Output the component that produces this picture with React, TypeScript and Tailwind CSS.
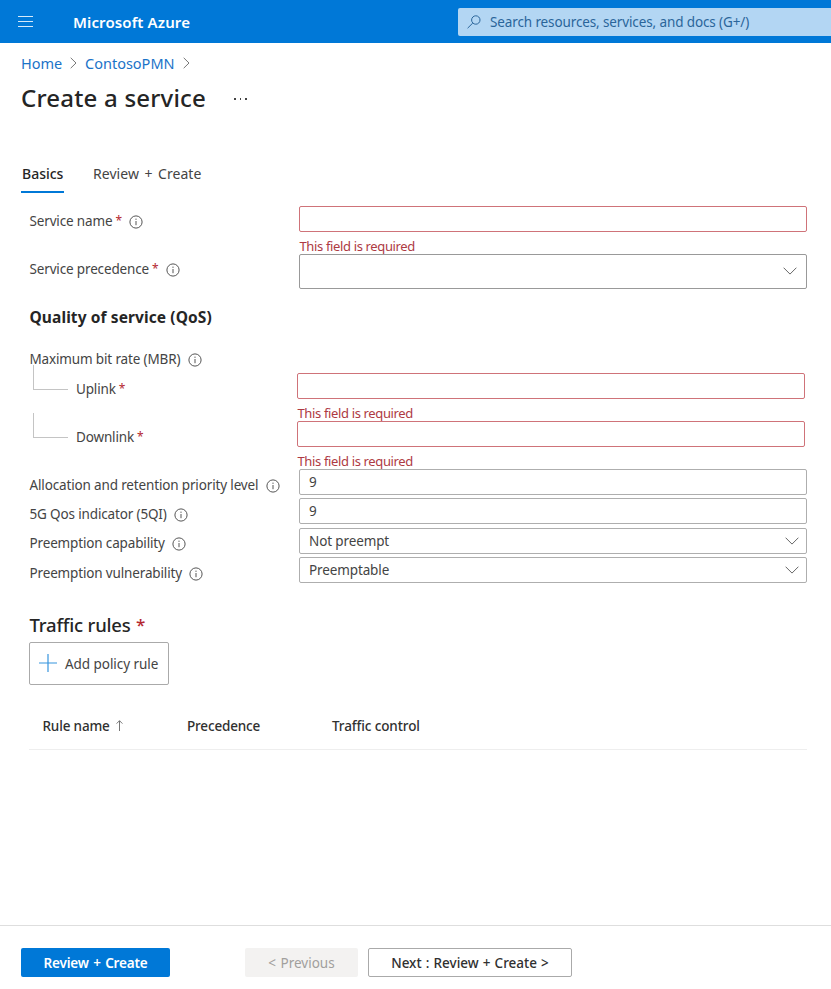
import type { ReactNode } from 'react';

function InfoIcon() {
  return (
    <svg className="mt-[2px] h-[14px] w-[14px] shrink-0" viewBox="0 0 14 14" fill="none">
      <circle cx="7" cy="7" r="6.1" stroke="#555" strokeWidth="1" />
      <path d="M7 6v4.2" stroke="#555" strokeWidth="1" />
      <circle cx="7" cy="4.2" r="0.65" fill="#555" />
    </svg>
  );
}

function Chevron({ className }: { className: string }) {
  return (
    <svg className={className} viewBox="0 0 14 8" fill="none">
      <path d="M0.6 0.7L7 7.1L13.4 0.7" stroke="#666" strokeWidth="1" />
    </svg>
  );
}

function Crumb() {
  return (
    <svg className="h-[12px] w-[7px] shrink-0" viewBox="0 0 7 12" fill="none">
      <path d="M0.7 0.8L6 6L0.7 11.2" stroke="#777" strokeWidth="1" />
    </svg>
  );
}

function Label({ children, required, info }: { children: ReactNode; required?: boolean; info?: boolean }) {
  return (
    <div className="flex h-[26px] items-center pl-[0.5px] tracking-[-0.15px]">
      <span>{children}</span>
      {required && <span className="ml-[3px] text-[12px] text-[#b4272f]">*</span>}
      {info && <span className="ml-[7.5px] flex"><InfoIcon /></span>}
    </div>
  );
}

function ErrorText() {
  return (
    <div className="flex h-[22px] items-center pt-[6px] pl-[0.5px] text-[13px] tracking-[-0.36px] text-[#ae3a43]">
      This field is required
    </div>
  );
}

function ValueBox({ children, select }: { children: ReactNode; select?: boolean }) {
  return (
    <div className="flex h-[26px] w-[508px] items-center justify-between rounded-[2px] border border-[#aeaeae] pr-[7px] pl-[9px] tracking-[-0.12px]">
      <span>{children}</span>
      {select && <Chevron className="h-[8px] w-[14px]" />}
    </div>
  );
}

function Branch({ children }: { children: ReactNode }) {
  return (
    <div className="flex h-[48px] pl-[4px]">
      <div className="-mt-[8px] h-[25px] w-[35px] border-b border-l border-[#c4c4c4]" />
      <div className="ml-[7.5px] w-[221.5px] pt-[2.5px]">
        <Label required>{children}</Label>
      </div>
      <div>
        <div className="h-[26px] w-[508px] rounded-[2px] border border-[#cf7379]" />
        <ErrorText />
      </div>
    </div>
  );
}

export default function App() {
  return (
    <div className="flex h-[989px] w-[831px] flex-col overflow-hidden bg-white font-['Noto_Sans','Open_Sans',sans-serif] text-[13.5px] leading-[20px] whitespace-nowrap text-[#444]">
      <header className="flex h-[43px] shrink-0 items-center bg-[#0078d7] pl-[18px] text-white">
        <div className="flex w-[15px] flex-col gap-[4px]">
          <div className="h-px bg-[#d5eafa]" />
          <div className="h-px bg-[#d5eafa]" />
          <div className="h-px bg-[#d5eafa]" />
        </div>
        <div className="ml-[40px] w-[385px] text-[15px] font-semibold tracking-[0.12px]">Microsoft Azure</div>
        <div className="flex h-[28px] flex-1 items-center rounded-l-[2px] bg-[#b3d6f3] pl-[9px] text-[#2a659a]">
          <svg className="h-[14px] w-[14px]" viewBox="0 0 14 14" fill="none">
            <circle cx="8.8" cy="5" r="4.2" stroke="#2a659a" />
            <path d="M5.8 8L0.6 13.2" stroke="#2a659a" />
          </svg>
          <span className="ml-[9px] tracking-[-0.12px]">Search resources, services, and docs (G+/)</span>
        </div>
      </header>

      <nav className="mt-[10px] flex h-[20px] items-center pl-[21px] text-[14.5px] text-[#1a73c8]">
        <span className="w-[49px]">Home</span>
        <Crumb />
        <span className="ml-[8px] w-[98px]">ContosoPMN</span>
        <Crumb />
      </nav>
      <div className="mt-[9px] flex h-[34px] items-center pl-[21px] text-[#252525]">
        <h1 className="w-[213px] pb-[2px] text-[24px] font-medium tracking-[0.2px]">Create a service</h1>
        <div className="flex gap-[4px]">
          <i className="h-[1.5px] w-[1.5px] bg-[#444]" />
          <i className="h-[1.5px] w-[1.5px] bg-[#444]" />
          <i className="h-[1.5px] w-[1.5px] bg-[#444]" />
        </div>
      </div>

      <div className="mt-[48px] flex h-[29px] pl-[21px] text-[14px]">
        <div className="mr-[29px] w-[43px] border-b-[2px] border-[#0078d7] pl-px font-medium text-[#252525]">Basics</div>
        <div className="tracking-[0.05px] [word-spacing:1.8px]">Review + Create</div>
      </div>

      <main className="mt-[13px] flex flex-1 flex-col pl-[29px]">
        <div className="flex h-[48px]">
          <div className="w-[270px] pt-[2px]"><Label required info>Service name</Label></div>
          <div>
            <div className="h-[26px] w-[508px] rounded-[2px] border border-[#cf7379]" />
            <ErrorText />
          </div>
        </div>
        <div className="flex h-[35px]">
          <div className="w-[270px] pt-[2px]"><Label required info>Service precedence</Label></div>
          <div className="flex h-[35px] w-[508px] items-center justify-end rounded-[2px] border border-[#999] pr-[9px] pb-px">
            <Chevron className="h-[8px] w-[14px]" />
          </div>
        </div>
        <h2 className="mt-[18px] h-[20px] pl-[0.5px] text-[15.5px] font-bold tracking-[0.1px] text-[#252525]">Quality of service (QoS)</h2>
        <div className="mt-[19px]"><Label info>Maximum bit rate (MBR)</Label></div>
        <div className="mt-px">
          <Branch>Uplink</Branch>
          <Branch>Downlink</Branch>
        </div>
        <div className="grid auto-rows-[29.4px] grid-cols-[270px_508px]">
          <div className="pt-[2.5px]"><Label info>Allocation and retention priority level</Label></div>
          <ValueBox>9</ValueBox>
          <div className="pt-[2.5px]"><Label info>5G Qos indicator (5QI)</Label></div>
          <ValueBox>9</ValueBox>
          <div className="pt-[2.5px]"><Label info>Preemption capability</Label></div>
          <ValueBox select>Not preempt</ValueBox>
          <div className="pt-[2.5px]"><Label info>Preemption vulnerability</Label></div>
          <ValueBox select>Preemptable</ValueBox>
        </div>

        <h2 className="mt-[23.4px] flex h-[30px] items-center pl-[0.5px] text-[18.5px] font-medium tracking-[-0.2px] text-[#252525]">
          Traffic rules<span className="ml-[5.5px] text-[17px] text-[#b4272f]">*</span>
        </h2>
        <button className="mt-[2px] flex h-[43px] w-[140px] items-center rounded-[2px] border border-[#aaa] pl-[9px]">
          <svg className="mb-px h-[18px] w-[18px]" viewBox="0 0 18 18">
            <path d="M9 0v18M0 9h18" stroke="#3795de" strokeWidth="1.2" />
          </svg>
          <span className="mt-px ml-[8px] tracking-[-0.05px]">Add policy rule</span>
        </button>
        <div className="mt-[17px] flex h-[48px] w-[778px] items-center border-b border-[#eee] pt-px pl-[13.5px] font-medium tracking-[-0.16px] text-[#303030]">
          <div className="flex w-[144.5px] items-center">
            Rule name
            <svg className="ml-[6px] h-[11px] w-[7px]" viewBox="0 0 7 11" fill="none">
              <path d="M3.5 11V0.8M0.6 3.6L3.5 0.7L6.4 3.6" stroke="#666" strokeWidth="0.9" />
            </svg>
          </div>
          <div className="w-[145px]">Precedence</div>
          <div className="tracking-[-0.1px]">Traffic control</div>
        </div>
      </main>

      <footer className="flex h-[64px] shrink-0 border-t border-[#dedede] pt-[22px] pl-[21px]">
        <button className="h-[29px] w-[149px] rounded-[2px] bg-[#0078d7] font-semibold tracking-[-0.15px] text-white [word-spacing:1px]">Review + Create</button>
        <button className="ml-[75px] h-[29px] w-[113px] rounded-[2px] bg-[#f3f2f1] text-[#a19f9d] [word-spacing:1px]">&lt; Previous</button>
        <button className="ml-[10px] h-[29px] w-[204px] rounded-[2px] border border-[#aaa] font-medium text-[#303030] [word-spacing:0.6px]">Next : Review + Create &gt;</button>
      </footer>
    </div>
  );
}
